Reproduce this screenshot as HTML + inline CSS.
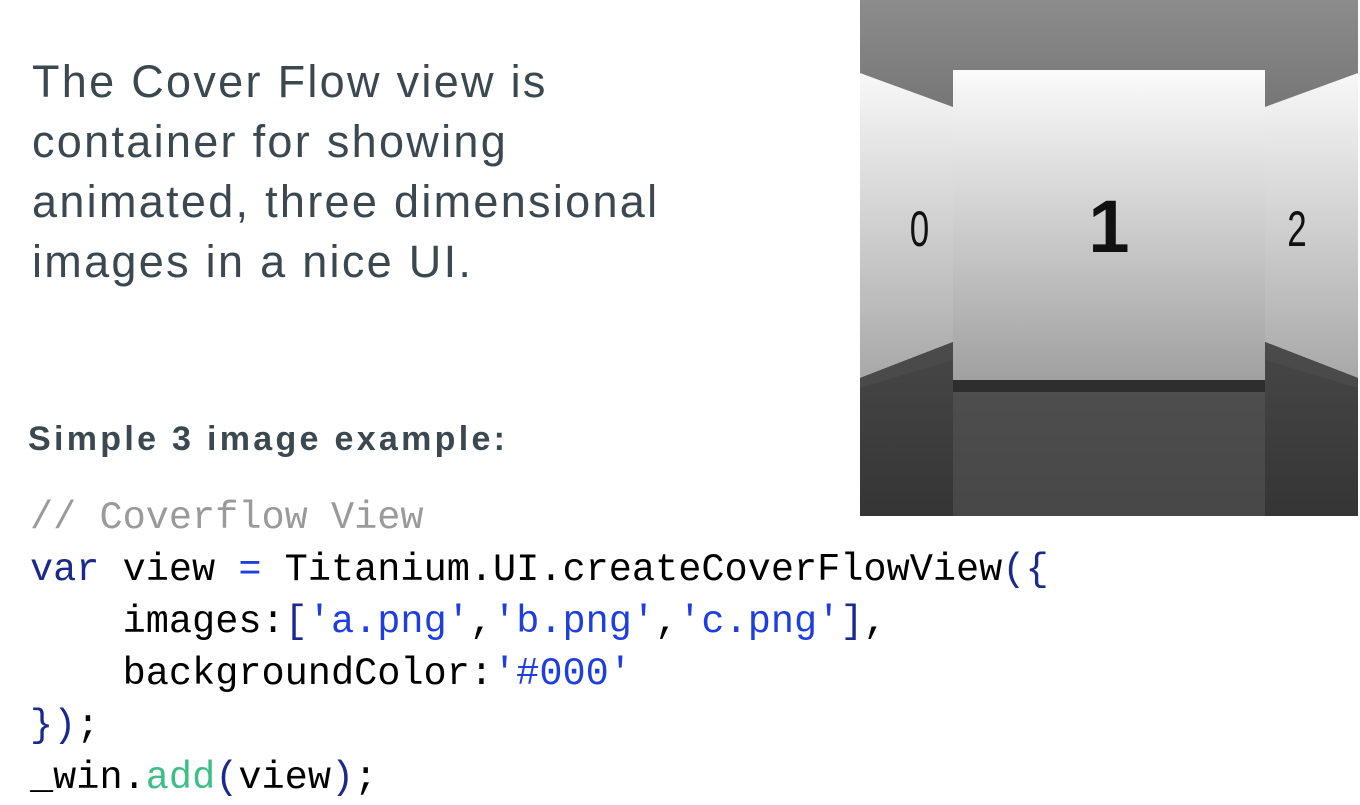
<!DOCTYPE html>
<html><head><meta charset="utf-8"><style>
body{margin:0;width:1360px;height:805px;background:#fff;overflow:hidden;position:relative;font-family:"Liberation Sans",sans-serif}
.h{position:absolute;left:32px;top:52px;font-size:45px;line-height:60px;color:#3b4850;letter-spacing:2.3px}
.s{position:absolute;left:28px;top:420px;font-size:34px;font-weight:bold;color:#3b4850;letter-spacing:3.3px}
.c{position:absolute;left:30px;top:492px;font-family:"Liberation Mono",monospace;font-size:38.6px;line-height:52px;color:#000;white-space:pre}
.cm{color:#9a9a9a}.kw{color:#1a2a8c}.op{color:#1e3ee0}.st{color:#1e3ee0}.br{color:#1a2a8c}.gr{color:#3cbf86}
</style></head><body>
<div class="h">The Cover Flow view is<br>container for showing<br>animated, three dimensional<br>images in a nice UI.</div>
<div class="s">Simple 3 image example:</div>
<div class="c"><span class="cm">// Coverflow View</span>
<span class="kw">var</span> view <span class="op">=</span> Titanium.UI.createCoverFlowView<span class="br">({</span>
    images:<span class="br">[</span><span class="st">'a.png'</span>,<span class="st">'b.png'</span>,<span class="st">'c.png'</span><span class="br">]</span>,
    backgroundColor:<span class="st">'#000'</span>
<span class="br">})</span>;
_win.<span class="gr">add</span><span class="br">(</span>view<span class="br">)</span>;</div>
<svg style="position:absolute;left:860px;top:0" width="500" height="516" viewBox="0 0 500 516">
<defs>
<linearGradient id="top" x1="0" y1="0" x2="0" y2="1"><stop offset="0" stop-color="#8c8c8c"/><stop offset="1" stop-color="#767676"/></linearGradient>
<linearGradient id="card" x1="0" y1="0" x2="0" y2="1"><stop offset="0" stop-color="#fbfbfb"/><stop offset="1" stop-color="#a0a0a0"/></linearGradient>
<linearGradient id="wall" x1="0" y1="0" x2="0" y2="1"><stop offset="0" stop-color="#f8f8f8"/><stop offset="1" stop-color="#a8a8a8"/></linearGradient>
<linearGradient id="floor" x1="0" y1="0" x2="0" y2="1"><stop offset="0" stop-color="#6a6a6a"/><stop offset="1" stop-color="#353535"/></linearGradient>
</defs>
<rect width="500" height="516" fill="url(#floor)"/>
<rect width="500" height="110" fill="url(#top)"/>
<polygon points="0,73 93,107 93,342 0,378" fill="url(#wall)"/>
<polygon points="498,73 405,107 405,342 498,378" fill="url(#wall)"/>
<polygon points="0,378 93,342 93,360 0,388" fill="#4a4a4a"/>
<polygon points="498,378 405,342 405,360 498,388" fill="#4a4a4a"/>
<rect x="93" y="380" width="312" height="136" fill="#5a5a5a" opacity="0.5"/>
<rect x="93" y="380" width="312" height="12" fill="#2e2e2e"/>
<rect x="93" y="70" width="312" height="310" fill="url(#card)"/>
<text x="249" y="252" font-family="Liberation Sans,sans-serif" font-size="74" font-weight="bold" text-anchor="middle" fill="#111">1</text>
<text x="60" y="246" font-family="Liberation Sans,sans-serif" font-size="50" text-anchor="middle" fill="#111" transform="scale(0.7,1) translate(25,0)">0</text>
<text x="437" y="246" font-family="Liberation Sans,sans-serif" font-size="50" text-anchor="middle" fill="#111" transform="translate(437,0) scale(0.7,1) translate(-437,0)">2</text>
<rect x="498" y="0" width="2" height="516" fill="#fff"/>
</svg>
</body></html>
